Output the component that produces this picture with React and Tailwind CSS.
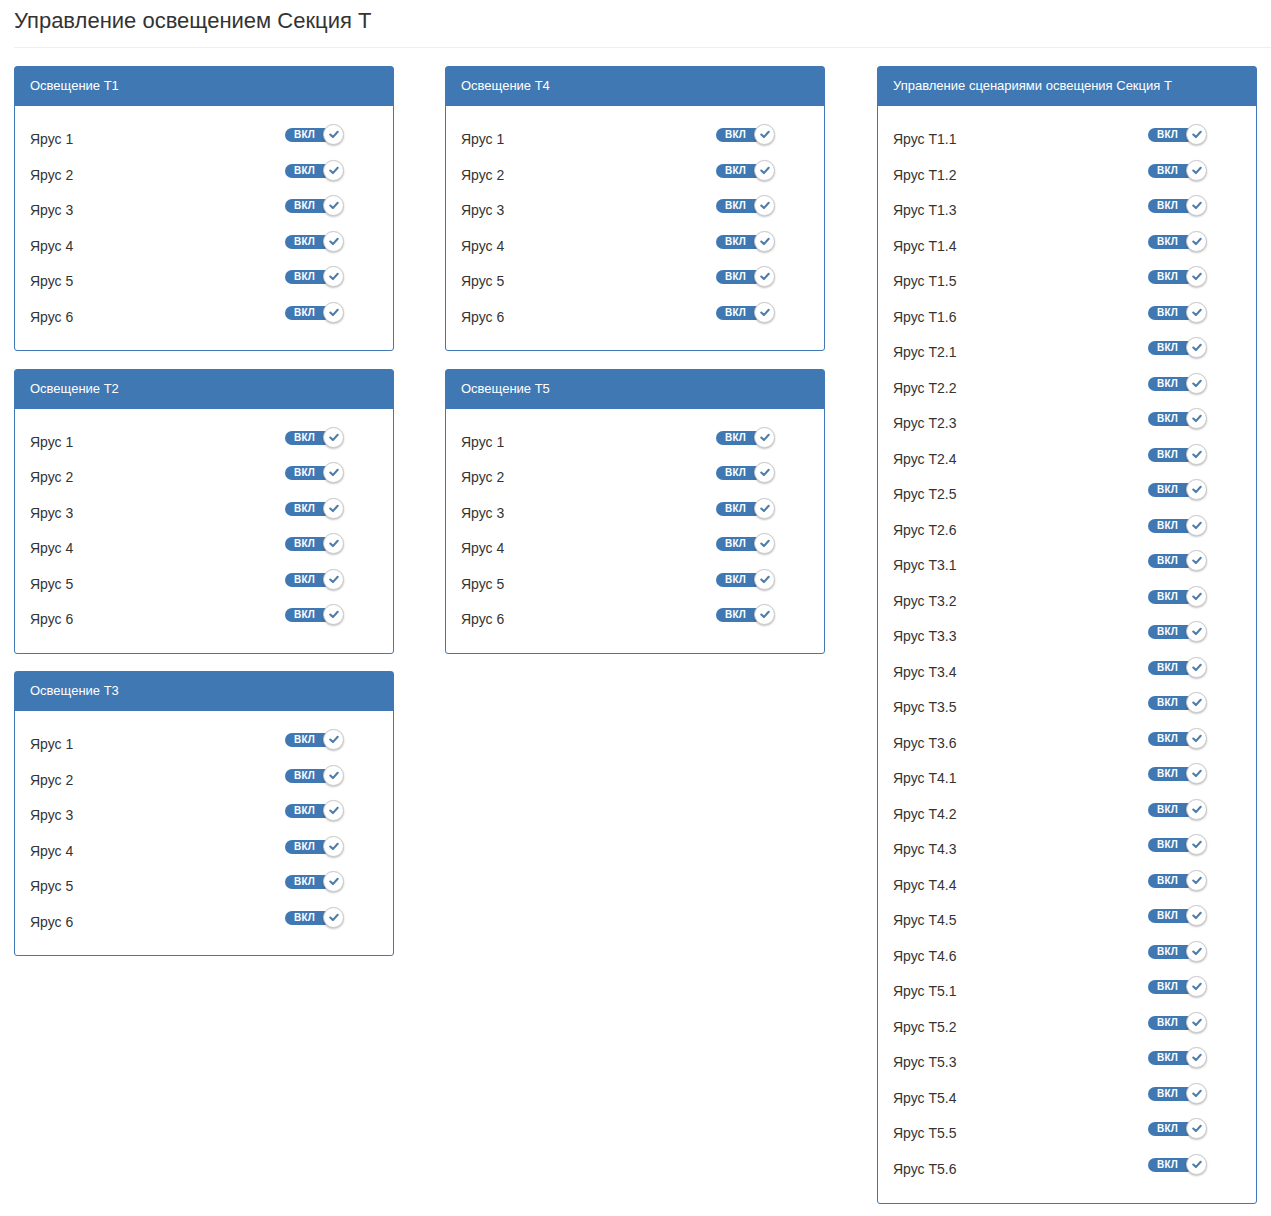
import React from "react";

const FONT = { fontFamily: '"Liberation Sans", Arial, sans-serif' };

const panels = [
    { title: "Освещение Т1", rows: ["Ярус 1", "Ярус 2", "Ярус 3", "Ярус 4", "Ярус 5", "Ярус 6"] },
    { title: "Освещение Т2", rows: ["Ярус 1", "Ярус 2", "Ярус 3", "Ярус 4", "Ярус 5", "Ярус 6"] },
    { title: "Освещение Т3", rows: ["Ярус 1", "Ярус 2", "Ярус 3", "Ярус 4", "Ярус 5", "Ярус 6"] },
    { title: "Освещение Т4", rows: ["Ярус 1", "Ярус 2", "Ярус 3", "Ярус 4", "Ярус 5", "Ярус 6"] },
    { title: "Освещение Т5", rows: ["Ярус 1", "Ярус 2", "Ярус 3", "Ярус 4", "Ярус 5", "Ярус 6"] },
];

// scenario rows: Т1.1 .. Т5.6
const scenarioRows = [];
for (let t = 1; t <= 5; t++) {
    for (let i = 1; i <= 6; i++) scenarioRows.push(`Ярус Т${t}.${i}`);
}

function Toggle() {
    return (
        <div className="relative w-[59px] h-[21px] mt-[3px] shrink-0">
            <div className="absolute left-0 top-[4px] h-[14px] w-[46px] rounded-full bg-[#3f78b3] flex items-center pl-[9px]">
                <span className="text-[10px] leading-none font-bold text-white tracking-[0.2px]">ВКЛ</span>
            </div>
            <div className="absolute right-0 top-0 w-[21px] h-[21px] rounded-full bg-white border border-[#c9c9c9] shadow-[0_1px_2px_rgba(0,0,0,0.25)] flex items-center justify-center">
                <svg width="10" height="9" viewBox="0 0 10 9">
                    <path d="M1.3 4.6 L3.9 7.1 L8.7 1.8" fill="none" stroke="#4f7ca8" strokeWidth="2.1" strokeLinecap="round" strokeLinejoin="round" />
                </svg>
            </div>
        </div>
    );
}

function Panel({ title, rows, tall }) {
    return (
        <div className="w-[380px] border border-[#3f78b3] rounded-[3px] bg-white">
            <div className="h-[39px] bg-[#3f78b3] px-[15px] pb-[1px] flex items-center text-white text-[13px]">
                {title}
            </div>
            <div className={`px-[15px] pt-[15px] ${tall ? "pb-[17px]" : "pb-[16px]"}`}>
                {rows.map((r, i) => (
                    <div key={i} className="h-[35.5px] flex items-start">
                        <div className="w-[255px] pt-[8px] text-[14px] leading-[20px] text-[#333]">{r}</div>
                        <Toggle />
                    </div>
                ))}
            </div>
        </div>
    );
}

export default function App() {
    return (
        <div className="bg-white min-h-[1216px] pl-[14px]" style={FONT}>
            <h3 className="pt-[9px] text-[22px] leading-[24px] text-[#333] pb-[14px] border-b border-[#eeeeee]">
                Управление освещением Секция Т
            </h3>

            <div className="flex gap-[51px] pt-[18px]">
                <div className="flex flex-col gap-[17.5px]">
                    {panels.slice(0, 3).map((p) => (
                        <Panel key={p.title} {...p} />
                    ))}
                </div>
                <div className="flex flex-col gap-[17.5px]">
                    {panels.slice(3).map((p) => (
                        <Panel key={p.title} {...p} />
                    ))}
                </div>
                <div className="ml-[1px]">
                    <Panel title="Управление сценариями освещения Секция Т" rows={scenarioRows} tall />
                </div>
            </div>
        </div>
    );
}
